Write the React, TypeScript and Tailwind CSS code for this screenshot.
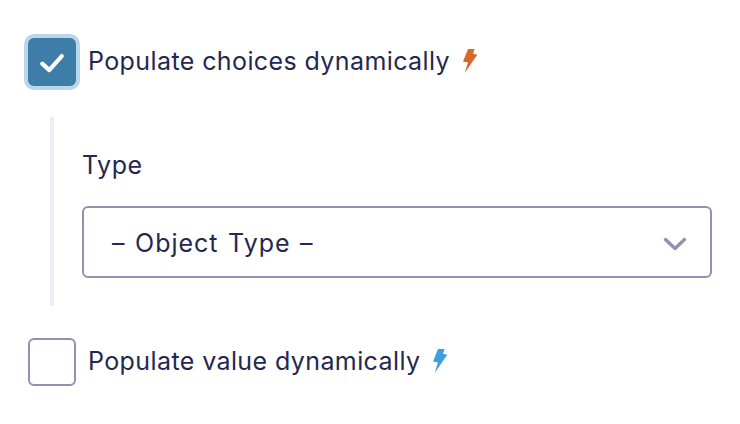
function Bolt({ className }: { className: string }) {
  return (
    <svg viewBox="0 0 15 24" className={className} fill="currentColor">
      <path d="M5 0H11.6L10 4.7L14.3 5.7L1.6 24L5 13.4L0 12.4Z" />
    </svg>
  );
}

function Checkbox({ checked }: { checked?: boolean }) {
  if (checked) {
    return (
      <span className="flex h-12 w-12 shrink-0 items-center justify-center rounded-md bg-[#3e7da8] border-2 border-[#3e7da8] ring-4 ring-[#b9d7ec]">
        <svg viewBox="0 0 24 24" className="h-[26px] w-[26px]" fill="none" stroke="#fff" strokeWidth="3.8" strokeLinecap="round" strokeLinejoin="round">
          <path d="M3 13.5L9.5 19.5L21 6.5" />
        </svg>
      </span>
    );
  }
  return <span className="h-12 w-12 shrink-0 rounded-md border-2 border-[#9092b2] bg-white" />;
}

export default function App() {
  return (
    <div className="h-[424px] w-[740px] overflow-hidden bg-white pl-7 pr-7 pt-[38px] font-['Inter',sans-serif] text-[25px] text-[#242850]">
      <div className="flex items-center gap-3">
        <Checkbox checked />
        <span className="-translate-y-[1px] leading-8 tracking-[0.4px]">Populate choices dynamically</span>
        <Bolt className="ml-px h-6 w-[15px] -translate-y-px text-[#d9662b]" />
      </div>
      <div className="mt-[31px] ml-[22px] h-[189px] border-l-4 border-[#ecedf8] pl-7 pt-[33px]">
        <div className="-translate-y-px leading-8 tracking-[0.5px]">Type</div>
        <div className="mt-[24px] flex h-[72px] items-center justify-between rounded-md border-2 border-[#9092b2] pl-[28px] pr-[23px] pt-[3px]">
          <span className="tracking-[1px] [word-spacing:1.5px]">– Object Type –</span>
          <svg viewBox="0 0 24 14" className="h-[14px] w-6" fill="none" stroke="#9092b2" strokeWidth="3.4" strokeLinecap="round" strokeLinejoin="round">
            <path d="M2.5 2.5L12 11.5L21.5 2.5" />
          </svg>
        </div>
      </div>
      <div className="mt-[32px] flex items-center gap-3">
        <Checkbox />
        <span className="-translate-y-[1px] leading-8 tracking-[0.4px]">Populate value dynamically</span>
        <Bolt className="ml-px h-6 w-[15px] -translate-y-px text-[#3c9fe0]" />
      </div>
    </div>
  );
}
